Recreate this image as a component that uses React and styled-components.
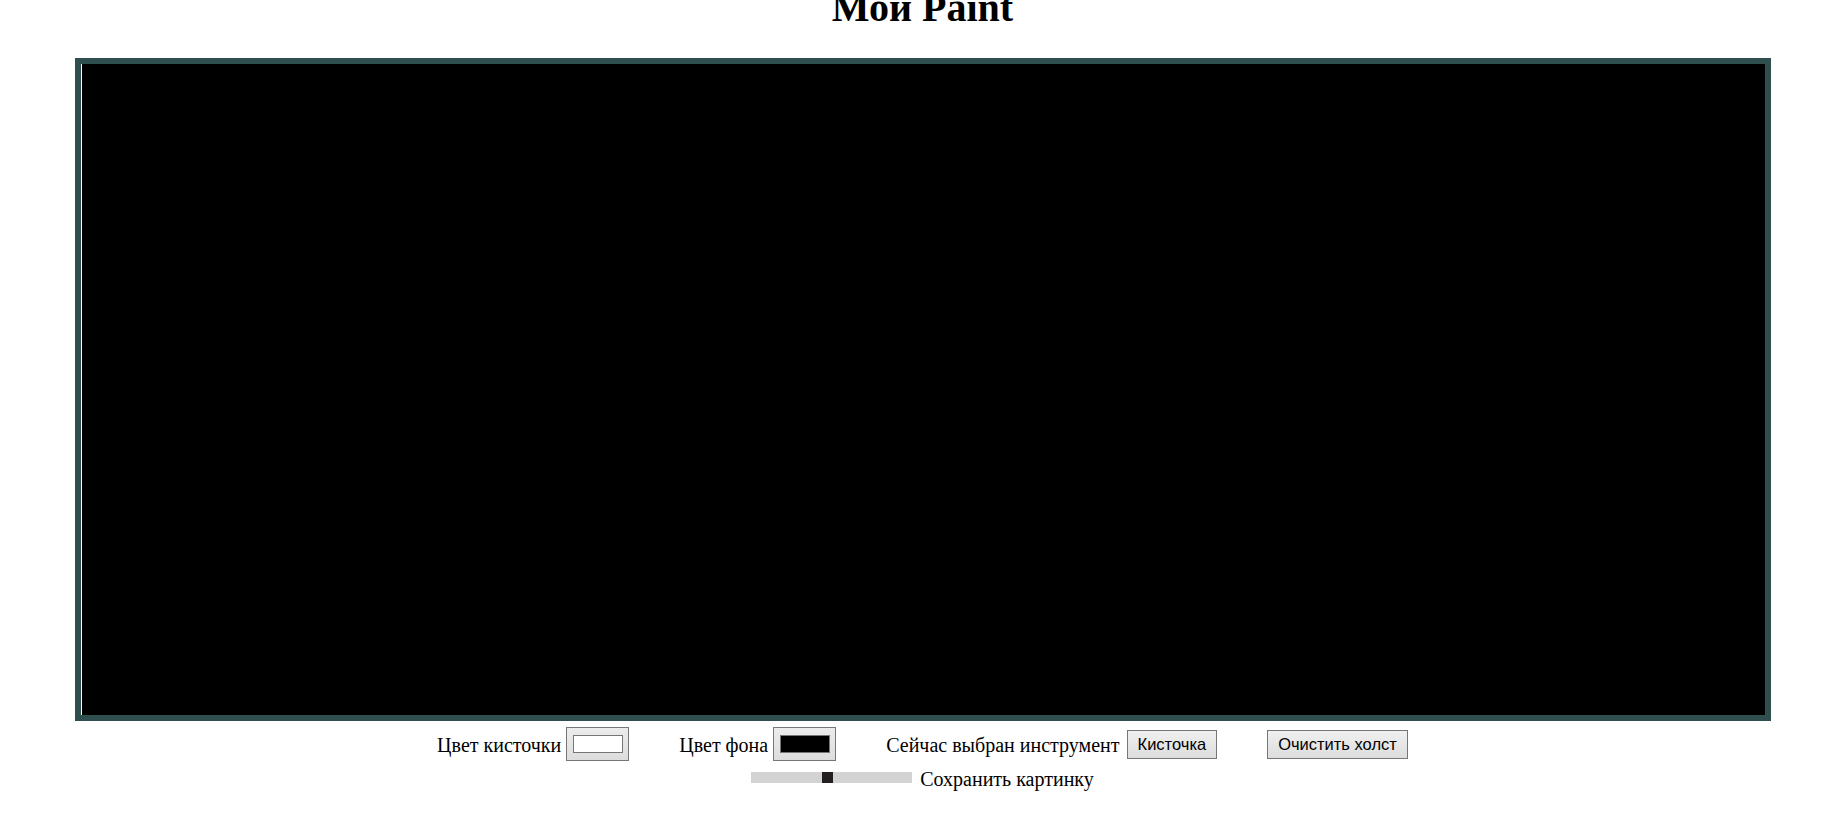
import React from 'react'
import styled, { createGlobalStyle } from 'styled-components'

const GlobalStyle = createGlobalStyle`
  html, body {
    margin: 0;
    padding: 0;
    background: #fff;
    overflow: hidden;
  }
  body {
    font-family: "Liberation Serif", "Times New Roman", serif;
    color: #000;
  }
`

const Page = styled.div`
  display: flex;
  flex-direction: column;
  align-items: center;
`

const Title = styled.h1`
  margin: -15px 0 28px;
  font-size: 40px;
  line-height: 45px;
  font-weight: bold;
  text-align: center;
`

const Board = styled.div`
  width: 1696px;
  height: 663px;
  box-sizing: border-box;
  border: 6px solid #2f4f4f;
  background: #000;
  box-shadow: inset 1px 0 0 #fff;
`

const Toolbar = styled.div`
  display: flex;
  align-items: center;
  justify-content: center;
  gap: 50px;
  margin-top: 6px;
  height: 34px;
`

const Group = styled.div`
  display: flex;
  align-items: center;
  gap: ${p => p.$gap || 5}px;
`

const Label = styled.span`
  font-size: 20px;
  line-height: 23px;
  padding-top: 3px;
  white-space: nowrap;
`

const ColorBox = styled.div`
  width: 63px;
  height: 34px;
  box-sizing: border-box;
  border: 1px solid #767676;
  background: linear-gradient(#ececec, #dddddd);
  display: flex;
  align-items: center;
  justify-content: center;
`

const Swatch = styled.div`
  width: 50px;
  height: 18px;
  box-sizing: border-box;
  border: 1px solid #767676;
  background: ${p => p.$color};
`

const Button = styled.button`
  height: 29px;
  padding: 0 10px;
  box-sizing: border-box;
  border: 1px solid #767676;
  border-radius: 0;
  background: linear-gradient(#f0f0f0, #dddddd);
  font-family: "Liberation Sans", Arial, sans-serif;
  font-size: 16.5px;
  color: #000;
  cursor: pointer;
`

const SaveRow = styled.div`
  display: flex;
  align-items: center;
  gap: 8px;
  margin-top: 3px;
`

const Range = styled.input`
  -webkit-appearance: none;
  appearance: none;
  width: 161px;
  height: 11px;
  margin: 0;
  background: #d3d3d3;
  outline: none;

  &::-webkit-slider-thumb {
    -webkit-appearance: none;
    appearance: none;
    width: 11px;
    height: 11px;
    border: none;
    border-radius: 0;
    background: #231f20;
    cursor: pointer;
  }
`

const SaveText = styled.span`
  font-size: 20px;
  line-height: 23px;
  padding-top: 4px;
`

export default function App() {
  const [size, setSize] = React.useState(47)
  const [tool] = React.useState('Кисточка')

  return (
    <Page>
      <GlobalStyle />
      <Title>Мой Paint</Title>
      <Board />
      <Toolbar>
        <Group>
          <Label>Цвет кисточки</Label>
          <ColorBox><Swatch $color="#ffffff" /></ColorBox>
        </Group>
        <Group>
          <Label>Цвет фона</Label>
          <ColorBox><Swatch $color="#000000" /></ColorBox>
        </Group>
        <Group $gap={7}>
          <Label>Сейчас выбран инструмент</Label>
          <Button>{tool}</Button>
        </Group>
        <Button>Очистить холст</Button>
      </Toolbar>
      <SaveRow>
        <Range type="range" min="0" max="100" value={size} onChange={e => setSize(+e.target.value)} />
        <SaveText>Сохранить картинку</SaveText>
      </SaveRow>
    </Page>
  )
}
